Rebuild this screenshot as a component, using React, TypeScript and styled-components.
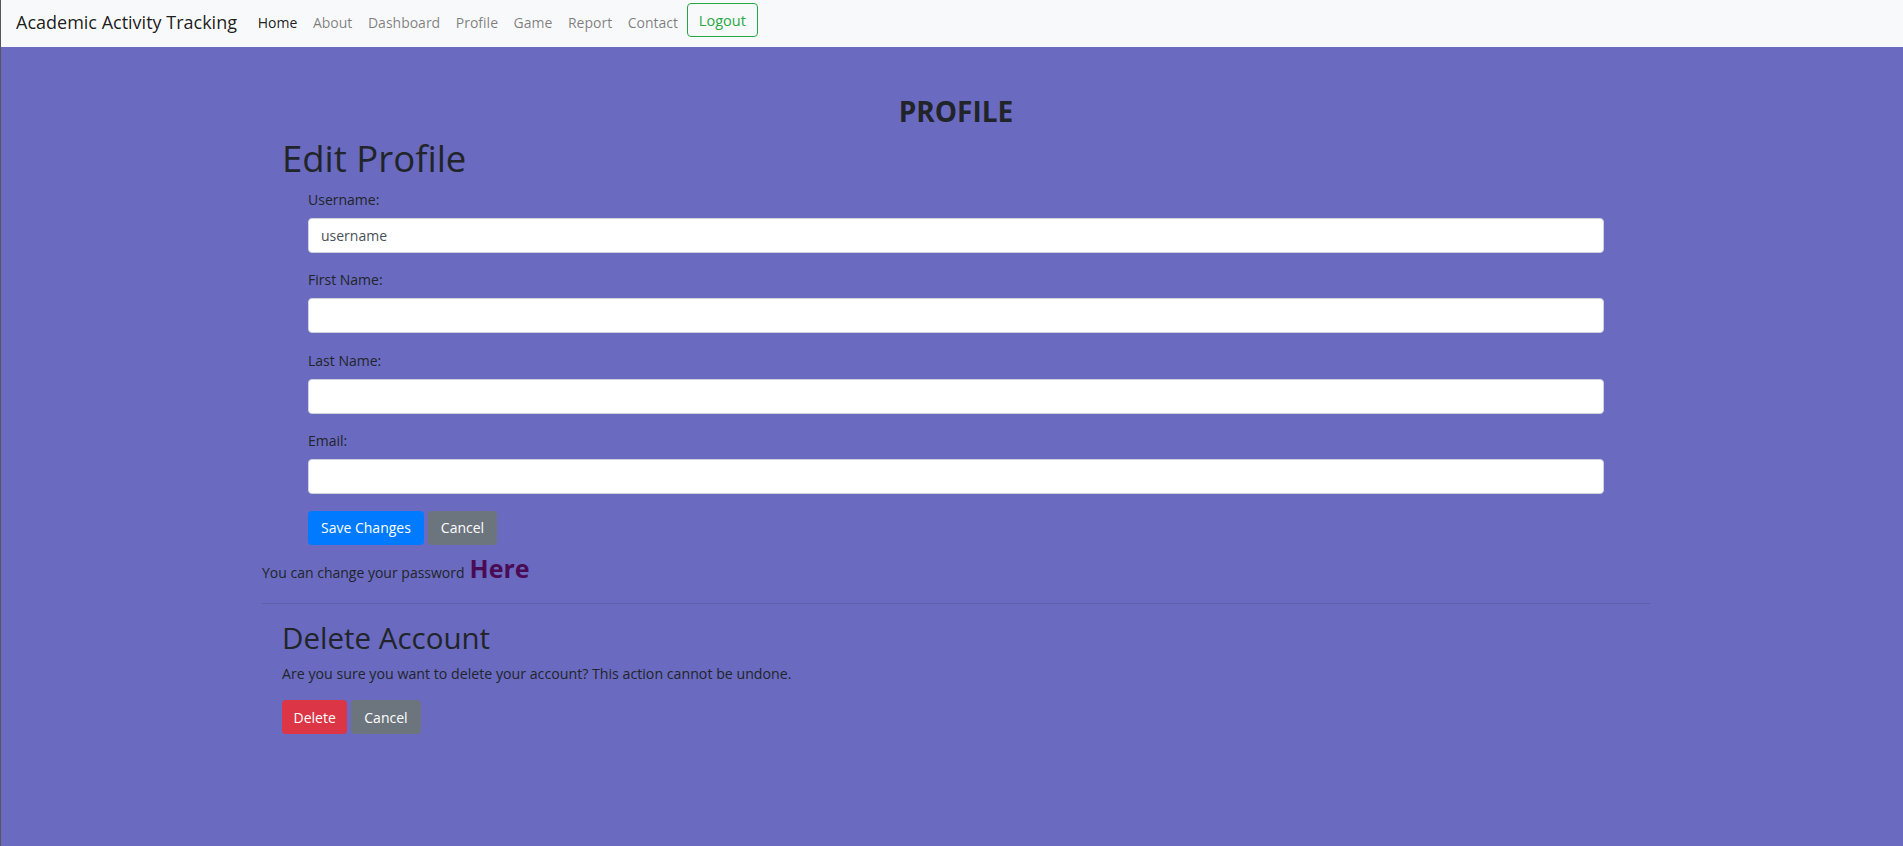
import React from "react";
import styled, { createGlobalStyle } from "styled-components";

const FONT = `"Open Sans", "Noto Sans", "Liberation Sans", sans-serif`;

const GlobalStyle = createGlobalStyle`
  html, body {
    margin: 0;
    padding: 0;
  }
  body {
    font-family: ${FONT};
    background: #6a6ac0;
    color: #212529;
  }
  * { box-sizing: border-box; }
`;

const Page = styled.div`
  min-height: 846px;
  background: #6a6ac0;
  border-left: 1px solid #55555f;
`;

const NavBar = styled.nav`
  height: 47px;
  background: #f8f9fa;
  display: flex;
  align-items: center;
  padding: 0 15px;
`;

const Brand = styled.a`
  font-size: 18px;
  color: rgba(0, 0, 0, 0.9);
  margin-right: 13px;
  text-decoration: none;
  white-space: nowrap;
  margin-top: -3px;
`;

const NavList = styled.div`
  display: flex;
  align-items: center;
`;

const NavLink = styled.a<{ $active?: boolean }>`
  font-size: 14px;
  padding: 0 7.8px;
  color: ${(p) => (p.$active ? "rgba(0,0,0,0.9)" : "rgba(0,0,0,0.5)")};
  text-decoration: none;
  margin-top: -3px;
`;

const LogoutButton = styled.button`
  font-family: ${FONT};
  font-size: 14.5px;
  height: 34px;
  padding: 0 11px;
  margin-left: 1px;
  margin-top: -7px;
  background: transparent;
  color: #28a745;
  border: 1px solid #28a745;
  border-radius: 4px;
`;

const Container = styled.main`
  width: 1388px;
  margin-left: 261px;
  padding-top: 47px;
`;

const PageTitle = styled.h2`
  margin: 0;
  text-align: center;
  font-size: 28px;
  font-weight: 700;
  line-height: 34px;
  color: #212529;
`;

const Section = styled.section<{ $top: number }>`
  padding: 0 20px;
  margin-top: ${(p) => p.$top}px;
`;

const Heading = styled.h1<{ $size: number }>`
  margin: 0;
  font-size: ${(p) => p.$size}px;
  font-weight: 500;
  line-height: 1.2;
  color: #212529;
`;

const Form = styled.form`
  padding: 0 26px;
  margin-top: 8px;
`;

const Group = styled.div`
  margin-bottom: 16.5px;
`;

const Label = styled.label`
  display: block;
  font-size: 14px;
  line-height: 21px;
  margin-bottom: 8px;
  color: #212529;
`;

const Input = styled.input`
  display: block;
  width: 100%;
  height: 35px;
  padding: 0 12px;
  font-family: ${FONT};
  font-size: 14px;
  color: #495057;
  background: #fff;
  border: 1px solid #ced4da;
  border-radius: 4px;
  outline: none;
`;

const ButtonRow = styled.div`
  display: flex;
  gap: 4px;
`;

const Button = styled.button<{ $variant: "primary" | "secondary" | "danger" }>`
  font-family: ${FONT};
  font-size: 14px;
  height: 34px;
  padding: 0 ${(p) => (p.$variant === "danger" ? 10.5 : 12)}px;
  color: #fff;
  border: 1px solid transparent;
  border-radius: 4px;
  background: ${(p) =>
    p.$variant === "primary" ? "#007bff" : p.$variant === "danger" ? "#dc3545" : "#6c757d"};
`;

const PasswordLine = styled.p`
  margin: 6px 0 0;
  font-size: 14px;
  display: flex;
  align-items: baseline;
  gap: 5px;
  color: #212529;
`;

const HereLink = styled.a`
  font-size: 25px;
  font-weight: 700;
  color: #4a0b55;
  text-decoration: none;
`;

const Divider = styled.hr`
  margin: 18px 0 0;
  border: 0;
  border-top: 1px solid rgba(0, 0, 0, 0.1);
`;

const Text = styled.p`
  margin: 8px 0 16px;
  font-size: 14.2px;
  line-height: 21px;
  color: #212529;
`;

const fields = [
  { label: "Username:", value: "username" },
  { label: "First Name:", value: "" },
  { label: "Last Name:", value: "" },
  { label: "Email:", value: "" },
];

export default function App() {
  return (
    <Page>
      <GlobalStyle />
      <NavBar>
        <Brand href="#">Academic Activity Tracking</Brand>
        <NavList>
          <NavLink $active href="#">Home</NavLink>
          <NavLink href="#">About</NavLink>
          <NavLink href="#">Dashboard</NavLink>
          <NavLink href="#">Profile</NavLink>
          <NavLink href="#">Game</NavLink>
          <NavLink href="#">Report</NavLink>
          <NavLink href="#">Contact</NavLink>
          <LogoutButton>Logout</LogoutButton>
        </NavList>
      </NavBar>
      <Container>
        <PageTitle>PROFILE</PageTitle>
        <Section $top={9}>
          <Heading $size={36.5}>Edit Profile</Heading>
          <Form onSubmit={(e) => e.preventDefault()}>
            {fields.map((f) => (
              <Group key={f.label}>
                <Label>{f.label}</Label>
                <Input type="text" defaultValue={f.value} />
              </Group>
            ))}
            <ButtonRow>
              <Button $variant="primary" type="button">Save Changes</Button>
              <Button $variant="secondary" type="button">Cancel</Button>
            </ButtonRow>
          </Form>
        </Section>
        <PasswordLine>
          You can change your password <HereLink href="#">Here</HereLink>
        </PasswordLine>
        <Divider />
        <Section $top={16}>
          <Heading as="h2" $size={29.5}>Delete Account</Heading>
          <Text>Are you sure you want to delete your account? This action cannot be undone.</Text>
          <ButtonRow>
            <Button $variant="danger" type="button">Delete</Button>
            <Button $variant="secondary" type="button">Cancel</Button>
          </ButtonRow>
        </Section>
      </Container>
    </Page>
  );
}
